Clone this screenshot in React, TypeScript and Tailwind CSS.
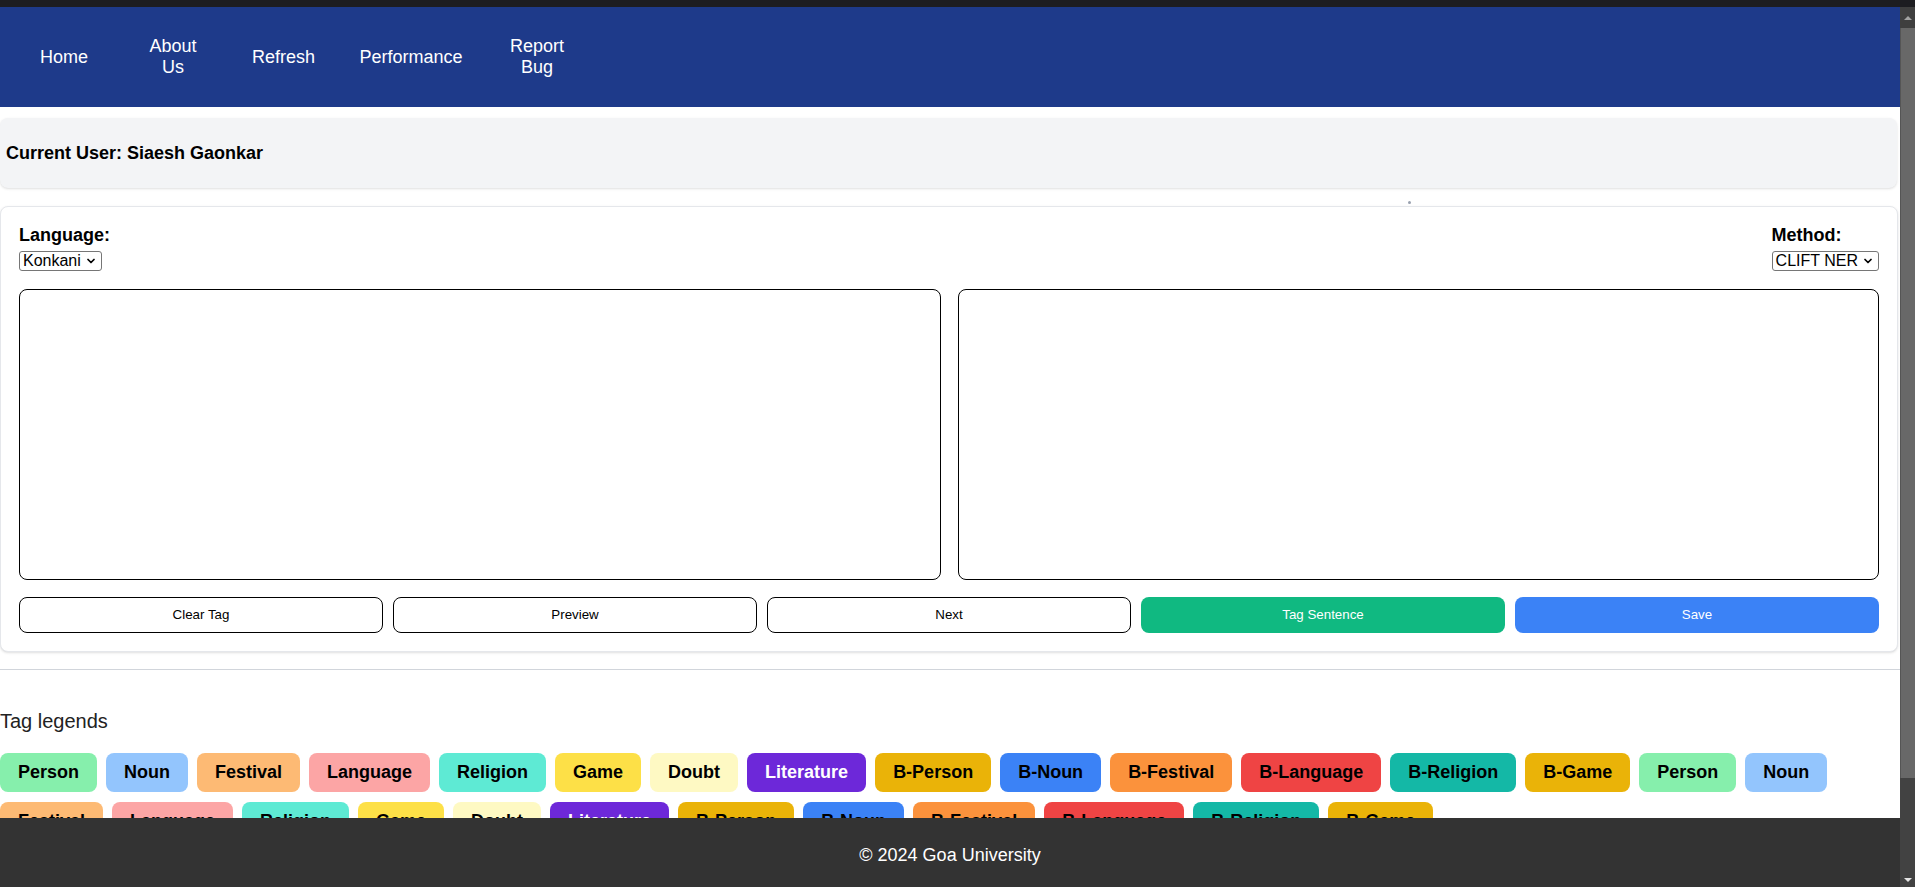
import { ChevronDown } from 'lucide-react';

const tags = [
    { label: 'Person', cls: 'bg-[#86efac] text-black' },
    { label: 'Noun', cls: 'bg-[#93c5fd] text-black' },
    { label: 'Festival', cls: 'bg-[#fdba74] text-black' },
    { label: 'Language', cls: 'bg-[#fca5a5] text-black' },
    { label: 'Religion', cls: 'bg-[#5eead4] text-black' },
    { label: 'Game', cls: 'bg-[#fde047] text-black' },
    { label: 'Doubt', cls: 'bg-[#fef9c3] text-black' },
    { label: 'Literature', cls: 'bg-[#6d28d9] text-white' },
    { label: 'B-Person', cls: 'bg-[#eab308] text-black' },
    { label: 'B-Noun', cls: 'bg-[#3b82f6] text-black' },
    { label: 'B-Festival', cls: 'bg-[#fb923c] text-black' },
    { label: 'B-Language', cls: 'bg-[#ef4444] text-black' },
    { label: 'B-Religion', cls: 'bg-[#14b8a6] text-black' },
    { label: 'B-Game', cls: 'bg-[#eab308] text-black' },
];

const FakeSelect = ({ value }: { value: string }) => (
    <div className="inline-flex items-center h-[20px] border border-[#767676] rounded-[3px] bg-white pl-[3px] pr-[4px] text-[16px] leading-none text-black gap-[4px]">
        <span>{value}</span>
        <ChevronDown size={12} strokeWidth={3.5} />
    </div>
);

const App = () => {
    const buttons = [
        { label: 'Clear Tag', cls: 'bg-white border border-black text-black' },
        { label: 'Preview', cls: 'bg-white border border-black text-black' },
        { label: 'Next', cls: 'bg-white border border-black text-black' },
        { label: 'Tag Sentence', cls: 'bg-[#10b981] text-white' },
        { label: 'Save', cls: 'bg-[#3b82f6] text-white' },
    ];

    return (
        <div className="h-screen flex flex-col bg-[#1d1d21] font-['Liberation_Sans',Arial,sans-serif]">
            <div className="h-[7px] shrink-0" />
            <div className="flex flex-1 min-h-0">
                <div className="relative flex-1 overflow-hidden bg-white">
                    {/* nav */}
                    <nav className="h-[100px] bg-[#1e3a8a] flex items-center text-white text-[18px] leading-[21px] text-center">
                        <a className="ml-[40px] w-[48px]">Home</a>
                        <a className="ml-[57px] w-[56px]">About Us</a>
                        <a className="ml-[51px] w-[63px]">Refresh</a>
                        <a className="ml-[44px] w-[104px]">Performance</a>
                        <a className="ml-[44px] w-[60px]">Report Bug</a>
                    </nav>

                    <div className="mt-[11px] mr-[3px] h-[70px] bg-[#f3f4f6] rounded-lg shadow-sm flex items-center px-[6px] text-[18px] font-bold text-black">
                        Current User: Siaesh Gaonkar
                    </div>

                    <div className="h-[18px] flex items-end pb-[2px] pl-[1408px]">
                        <div className="w-[3px] h-[3px] rounded-full bg-gray-400" />
                    </div>

                    <div className="mr-[2px] border border-[#e5e7eb] rounded-lg shadow-sm p-[18px] bg-white">
                        <div className="flex justify-between">
                            <div className="flex flex-col items-start">
                                <label className="text-[18px] leading-[21px] font-bold text-black mb-[5px]">Language:</label>
                                <FakeSelect value="Konkani" />
                            </div>
                            <div className="flex flex-col items-start">
                                <label className="text-[18px] leading-[21px] font-bold text-black mb-[5px]">Method:</label>
                                <FakeSelect value="CLIFT NER" />
                            </div>
                        </div>

                        <div className="mt-[18px] flex gap-[17px]">
                            <textarea className="flex-1 h-[291px] border border-black rounded-lg resize-none" />
                            <textarea className="flex-1 h-[291px] border border-black rounded-lg resize-none" />
                        </div>

                        <div className="mt-[17px] grid grid-cols-5 gap-[10px]">
                            {buttons.map((b) => (
                                <button key={b.label} className={`h-[36px] rounded-lg text-[13.33px] ${b.cls}`}>
                                    {b.label}
                                </button>
                            ))}
                        </div>
                    </div>

                    <div className="mt-[17px] border-t border-[#d1d5db]" />

                    <h2 className="mt-[40px] text-[20px] leading-[23px] text-[#222]">Tag legends</h2>

                    <div className="mt-[20px] flex flex-wrap gap-x-[9px] gap-y-[10px] pr-[10px]">
                        {[...tags, ...tags].map((t, i) => (
                            <span key={i} className={`px-[18px] py-[9px] leading-[21px] text-[18px] font-bold rounded-lg ${t.cls}`}>
                                {t.label}
                            </span>
                        ))}
                    </div>

                    <footer className="absolute bottom-0 inset-x-0 h-[69px] pt-[6px] bg-[#333333] flex items-center justify-center text-white text-[18px]">
                        © 2024 Goa University
                    </footer>
                </div>

                {/* scrollbar */}
                <div className="w-[15px] flex flex-col bg-[#424242]">
                    <div className="h-[21px] flex items-center justify-center bg-[#3f3f3f]">
                        <div className="w-0 h-0 border-l-[4px] border-r-[4px] border-b-[4px] border-l-transparent border-r-transparent border-b-[#a3a3a3]" />
                    </div>
                    <div className="h-[750px] bg-[#686868] border-l border-[#555]" />
                    <div className="flex-1" />
                    <div className="h-[15px] flex items-center justify-center">
                        <div className="w-0 h-0 border-l-[4px] border-r-[4px] border-t-[4px] border-l-transparent border-r-transparent border-t-[#e5e5e5]" />
                    </div>
                </div>
            </div>
        </div>
    );
};

export default App;
